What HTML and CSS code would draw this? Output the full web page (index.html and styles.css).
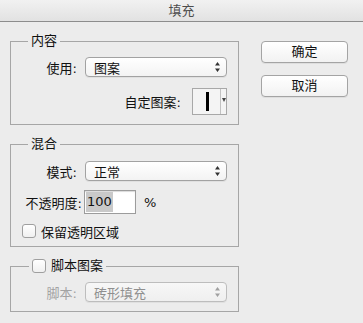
FILE: index.html
```html
<!DOCTYPE html>
<html>
<head>
<meta charset="utf-8">
<link rel="stylesheet" href="styles.css">
</head>
<body>
<div class="window">
  <div class="titlebar">填充</div>
  <div class="content">
    <div class="left">
      <div class="group g1">
        <div class="legend">内容</div>
        <div class="row">
          <div class="label">使用:</div>
          <div class="select"><span>图案</span><svg class="arrows" width="5" height="10" viewBox="0 0 5 10"><path d="M2.5 0 L5 3.5 L0 3.5 Z M2.5 10 L5 6.5 L0 6.5 Z" fill="#333"/></svg></div>
        </div>
        <div class="row end">
          <div class="plabel">自定图案:</div>
          <div class="swatch">
            <div class="swatch-main"><div class="bar"></div></div>
            <div class="swatch-drop"><svg width="4" height="4" viewBox="0 0 4 4"><path d="M0 0 L4 0 L2 4 Z" fill="#444"/></svg></div>
          </div>
        </div>
      </div>
      <div class="group g2">
        <div class="legend">混合</div>
        <div class="row">
          <div class="label">模式:</div>
          <div class="select"><span>正常</span><svg class="arrows" width="5" height="10" viewBox="0 0 5 10"><path d="M2.5 0 L5 3.5 L0 3.5 Z M2.5 10 L5 6.5 L0 6.5 Z" fill="#333"/></svg></div>
        </div>
        <div class="row opacity">
          <div class="label wide">不透明度:</div>
          <div class="input"><span class="sel">100</span></div>
          <div class="pct">%</div>
        </div>
        <div class="row check-row">
          <div class="checkbox"></div>
          <div class="ctext">保留透明区域</div>
        </div>
      </div>
      <div class="group g3">
        <div class="legend check-legend">
          <div class="checkbox"></div>
          <div class="ctext">脚本图案</div>
        </div>
        <div class="row">
          <div class="label disabled">脚本:</div>
          <div class="select disabled"><span>砖形填充</span><svg class="arrows" width="5" height="10" viewBox="0 0 5 10"><path d="M2.5 0 L5 3.5 L0 3.5 Z M2.5 10 L5 6.5 L0 6.5 Z" fill="#a0a0a0"/></svg></div>
        </div>
      </div>
    </div>
    <div class="right">
      <div class="button">确定</div>
      <div class="button">取消</div>
    </div>
  </div>
</div>
</body>
</html>
```
FILE: styles.css
```css
* { box-sizing: border-box; }
html, body { margin: 0; padding: 0; }
body {
  font-family: "DejaVu Sans", "Noto Sans CJK SC", sans-serif;
  font-size: 13px;
  color: #111;
}
.window {
  width: 363px;
  height: 323px;
  background: #ececec;
  overflow: hidden;
}
.titlebar {
  height: 22px;
  line-height: 22px;
  text-align: center;
  color: #4d4d4d;
  background: linear-gradient(#f1f1f1, #e2e2e2);
  border-bottom: 1px solid #8d8d8d;
}
.content {
  display: flex;
  padding-left: 10px;
}
.left {
  width: 229px;
  margin-top: 19px;
}
.right {
  width: 87px;
  margin-left: 22px;
  margin-top: 19px;
  display: flex;
  flex-direction: column;
  gap: 12px;
}
.button {
  height: 22px;
  line-height: 20px;
  text-align: center;
  border: 1px solid #a4a4a4;
  border-radius: 4px;
  background: linear-gradient(#ffffff, #f2f2f2);
  box-shadow: 0 1px 0 rgba(0,0,0,0.06);
}
.group {
  position: relative;
  border: 1px solid #a6a6a6;
  padding: 15px 11px 9px 0;
}
.g2 { margin-top: 19px; padding-top: 16px; padding-bottom: 8px; }
.g3 { margin-top: 19px; padding-top: 15px; padding-bottom: 9px; }
.legend {
  position: absolute;
  top: -9px;
  left: 17px;
  height: 16px;
  line-height: 16px;
  padding: 0 3px;
  background: #ececec;
}
.check-legend {
  left: 18px;
  display: flex;
  align-items: center;
  gap: 5px;
}
.row {
  display: flex;
  align-items: center;
}
.row.end {
  justify-content: flex-end;
  margin-top: 11px;
}
.label {
  width: 66px;
  text-align: right;
  margin-right: 8px;
}
.label.wide {
  width: 71px;
  margin-right: 2px;
}
.label.disabled { color: #a3a3a3; }
.select {
  flex: 1;
  height: 20px;
  border: 1px solid #a2a2a2;
  border-radius: 4px;
  background: linear-gradient(#ffffff, #f3f3f3);
  box-shadow: 0 1px 0 rgba(0,0,0,0.05);
  display: flex;
  align-items: center;
  justify-content: space-between;
  padding: 0 6px 0 8px;
}
.select.disabled {
  color: #8f8f8f;
  border-color: #bdbdbd;
  background: linear-gradient(#f7f7f7, #efefef);
}
.plabel { margin-right: 11px; }
.swatch {
  width: 35px;
  height: 27px;
  border: 1px solid #a8a8a8;
  background: #f4f4f4;
  display: flex;
}
.swatch-main {
  flex: 1;
  display: flex;
  align-items: center;
  justify-content: center;
  padding-left: 2px;
}
.bar {
  width: 3px;
  height: 19px;
  background: #000;
}
.swatch-drop {
  width: 6px;
  border-left: 1px solid #c2c2c2;
  display: flex;
  align-items: center;
  justify-content: center;
  padding-bottom: 3px;
}
.row.opacity { margin-top: 9px; }
.input {
  width: 52px;
  height: 24px;
  border: 1px solid #9c9c9c;
  box-shadow: inset 0 1px 1px rgba(0,0,0,0.15);
  background: #fff;
  padding: 1px 0 1px 1px;
  display: flex;
}
.sel {
  background: #c9c9c9;
  line-height: 20px;
  padding: 0 1px;
}
.pct { margin-left: 8px; }
.check-row {
  margin-top: 10px;
  padding-left: 11px;
  gap: 5px;
  height: 14px;
}
.checkbox {
  width: 14px;
  height: 14px;
  border: 1px solid #9f9f9f;
  border-radius: 3px;
  background: linear-gradient(#ffffff, #f0f0f0);
}
```
